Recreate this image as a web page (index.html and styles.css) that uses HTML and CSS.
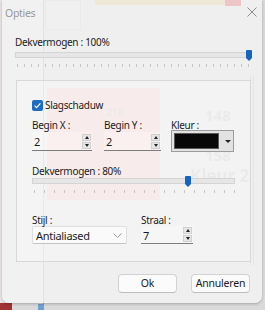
FILE: index.html
```html
<!DOCTYPE html>
<html lang="nl">

<head>
    <meta charset="UTF-8" />
    <meta name="viewport" content="width=device-width, initial-scale=1.0" />
    <title>Opties</title>
    <link rel="stylesheet" href="styles.css">
</head>

<body>
    <!-- what shows through the window behind it -->
    <div class="backdrop">
        <div class="bd-left"></div>
        <div class="bd-line"></div>
        <div class="bd-tab"></div>
        <div class="bd-yellow"></div>
        <div class="bd-red"></div>
        <div class="bd-pink"></div>
        <div class="bd-right"></div>
        <div class="bd-num n210">210</div>
        <div class="bd-num n148">148</div>
        <div class="bd-num n159">159</div>
        <div class="bd-num n158">158</div>
        <div class="bd-num k2">Kleur 2</div>
        <div class="bd-bottom"></div>
        <div class="bd-blue"></div>
    </div>

    <div class="dialog">
        <div class="titlebar">
            <span class="title">Opties</span>
            <svg class="close" width="10" height="10" viewBox="0 0 10 10">
                <path d="M0.5 0.5 L9.5 9.5 M9.5 0.5 L0.5 9.5" stroke="#8c8c8c" stroke-width="1" fill="none" />
            </svg>
        </div>

        <div class="content">
            <div class="label">Dekvermogen : 100%</div>
            <div class="slider slider-main">
                <div class="track"></div>
                <svg class="thumb" style="left: 231px" width="6" height="11" viewBox="0 0 6 11">
                    <path d="M1 0 H5 A1 1 0 0 1 6 1 V8 L3 11 L0 8 V1 A1 1 0 0 1 1 0 Z" fill="#1465c0" />
                </svg>
                <div class="ticks"></div>
            </div>

            <div class="group">
                <div class="check">
                    <svg width="11" height="11" viewBox="0 0 11 11">
                        <rect x="0" y="0" width="11" height="11" rx="2" fill="#1d6cc4" />
                        <path d="M2.6 5.6 L4.6 7.6 L8.4 3.4" stroke="#fff" stroke-width="1.2" fill="none" />
                    </svg>
                    <span>Slagschaduw</span>
                </div>

                <div class="row">
                    <div class="col col-x">
                        <div class="label">Begin X :</div>
                        <div class="spin">
                            <span>2</span>
                            <div class="arrows"><i class="up"></i><i class="down"></i></div>
                        </div>
                    </div>
                    <div class="col col-y">
                        <div class="label">Begin Y :</div>
                        <div class="spin">
                            <span>2</span>
                            <div class="arrows"><i class="up"></i><i class="down"></i></div>
                        </div>
                    </div>
                    <div class="col col-color">
                        <div class="label">Kleur :</div>
                        <div class="colorpick">
                            <div class="swatch"></div>
                            <i class="drop"></i>
                        </div>
                    </div>
                </div>

                <div class="label label-op">Dekvermogen : 80%</div>
                <div class="slider slider-shadow">
                    <div class="track"></div>
                    <svg class="thumb" style="left: 153px" width="6" height="11" viewBox="0 0 6 11">
                        <path d="M1 0 H5 A1 1 0 0 1 6 1 V8 L3 11 L0 8 V1 A1 1 0 0 1 1 0 Z" fill="#1465c0" />
                    </svg>
                    <div class="ticks"></div>
                </div>

                <div class="row row-bottom">
                    <div class="col col-style">
                        <div class="label">Stijl :</div>
                        <div class="combo">
                            <span>Antialiased</span>
                            <svg width="9" height="5" viewBox="0 0 9 5">
                                <path d="M0.5 0.5 L4.5 4.5 L8.5 0.5" stroke="#9a9a9a" stroke-width="1" fill="none" />
                            </svg>
                        </div>
                    </div>
                    <div class="col col-radius">
                        <div class="label">Straal :</div>
                        <div class="spin spin-low">
                            <span>7</span>
                            <div class="arrows"><i class="up"></i><i class="down"></i></div>
                        </div>
                    </div>
                </div>
            </div>

            <div class="buttons">
                <button>Ok</button>
                <button>Annuleren</button>
            </div>
        </div>
    </div>
</body>

</html>
```

FILE: styles.css
```css
* {
    box-sizing: border-box;
    margin: 0;
    padding: 0;
}

body {
    font-family: 'Noto Sans', 'Open Sans', sans-serif;
    font-size: 10px;
    letter-spacing: -0.3px;
    color: #1b1b1b;
    background: #4f4f4f;
    width: 265px;
    height: 310px;
    overflow: hidden;
    position: relative;
}

/* behind the dialog */
.backdrop {
    position: absolute;
    top: 0;
    left: 0;
    width: 265px;
    height: 310px;
    background: #dadada;
    z-index: 0;
}

.backdrop div {
    position: absolute;
}

.bd-left {
    left: 0;
    top: 0;
    width: 43px;
    height: 303px;
    background: #ece6e6;
}

.bd-line {
    left: 43px;
    top: 0;
    width: 1px;
    height: 310px;
    background: #9a9a9a;
}

.bd-tab {
    left: 45px;
    top: 0;
    width: 36px;
    height: 30px;
    border: 1px solid #c4c4c4;
    background: #dedede;
}

.bd-yellow {
    left: 95px;
    top: 0;
    width: 135px;
    height: 5px;
    background: #d8b860;
}

.bd-red {
    left: 225px;
    top: 0;
    width: 16px;
    height: 6px;
    background: #d01818;
}

.bd-pink {
    left: 47px;
    top: 88px;
    width: 113px;
    height: 112px;
    background: #ffa4a4;
}

.bd-right {
    left: 250px;
    top: 75px;
    width: 4px;
    height: 190px;
    border-left: 1px solid #b0b0b0;
    border-right: 1px solid #b0b0b0;
}

.bd-num {
    font-weight: bold;
    font-size: 15px;
    letter-spacing: 0;
    color: #a8a0a0;
    line-height: 1;
}

.n210 {
    left: 106px;
    top: 108px;
    font-size: 10px;
    line-height: 8px;
}

.n148 {
    left: 205px;
    top: 108px;
}

.n159 {
    left: 205px;
    top: 128px;
}

.n158 {
    left: 205px;
    top: 148px;
}

.k2 {
    left: 190px;
    top: 167px;
    font-size: 17px;
}

.bd-bottom {
    left: 0;
    top: 303px;
    width: 12px;
    height: 7px;
    background: #a03434;
}

.bd-blue {
    left: 38px;
    top: 304px;
    width: 6px;
    height: 6px;
    background: #6f9fd0;
}

/* dialog */
.dialog {
    position: relative;
    z-index: 1;
    width: 260px;
    height: 303px;
    margin-left: 2px;
    border-radius: 0 0 7px 7px;
    background: rgba(244, 244, 244, 0.8);
    box-shadow: 0 1px 3px rgba(0, 0, 0, 0.25);
}

.titlebar {
    height: 26px;
    display: flex;
    align-items: center;
    justify-content: space-between;
    padding: 0 5px 0 3px;
}

.title {
    color: #9a9a9a;
    font-size: 10.5px;
}

.close {
    margin-top: -2px;
}

.content {
    padding: 0 12px 0 13px;
}

.label {
    line-height: 14px;
    height: 14px;
    white-space: nowrap;
}

.content > .label {
    margin-top: 9px;
}

/* sliders */
.slider {
    position: relative;
    height: 18px;
}

.slider-main {
    margin-top: 1px;
    width: 235px;
}

.slider-shadow {
    margin-top: -2px;
    width: 203px;
}

.track {
    position: absolute;
    left: 0;
    right: 0;
    top: 2px;
    height: 6px;
    border: 1px solid #d4d4d4;
    background: #e6e6e6;
}

.thumb {
    position: absolute;
    top: 0;
}

.ticks {
    position: absolute;
    left: 2px;
    right: 0;
    top: 14px;
    height: 3px;
}

.slider-main .ticks {
    background: repeating-linear-gradient(to right, #c6c6c6 0 1px, transparent 1px 7px);
}

.slider-shadow .ticks {
    background: repeating-linear-gradient(to right, #c6c6c6 0 1px, transparent 1px 10px);
}

/* group box */
.group {
    margin-top: 12px;
    margin-left: 1px;
    width: 235px;
    border: 1px solid #d8d8d8;
    background: rgba(255, 255, 255, 0.25);
    padding: 18px 0 17px 15px;
}

.check {
    display: flex;
    align-items: center;
    gap: 2px;
    height: 12px;
    line-height: 12px;
}

.row {
    display: flex;
    margin-top: 7px;
}

.col-x {
    width: 60px;
}

.col-y {
    width: 57px;
    margin-left: 12px;
}

.col-color {
    width: 63px;
    margin-left: 10px;
}

.spin {
    height: 19px;
    display: flex;
    align-items: center;
    justify-content: space-between;
    padding: 0 1px 0 2px;
    font-size: 11px;
    border-bottom: 1px solid #7d7d7d;
    background: rgba(255, 255, 255, 0.25);
}

.spin span {
    padding-top: 1px;
}

.arrows {
    display: flex;
    flex-direction: column;
    gap: 1px;
}

.arrows i {
    display: block;
    width: 9px;
    height: 7px;
    background: #e6e6e6;
    border: 1px solid #d0d0d0;
    position: relative;
}

.arrows i::after {
    content: '';
    position: absolute;
    left: 1.5px;
    top: 1px;
    border-left: 2.5px solid transparent;
    border-right: 2.5px solid transparent;
}

.arrows .up::after {
    border-bottom: 3px solid #222;
}

.arrows .down::after {
    border-top: 3px solid #222;
}

.colorpick {
    height: 22px;
    margin-top: -2px;
    border: 1px solid #9c9c9c;
    background: #e2e2e2;
    display: flex;
    align-items: center;
    padding: 0 2px;
}

.swatch {
    width: 45px;
    height: 16px;
    background: #080808;
    border: 1px solid #5a5a5a;
}

.drop {
    margin-left: 6px;
    border-left: 3px solid transparent;
    border-right: 3px solid transparent;
    border-top: 3px solid #222;
}

.label-op {
    margin-top: 12px;
}

.row-bottom {
    margin-top: 19px;
}

.col-style {
    width: 95px;
}

.col-radius {
    width: 52px;
    margin-left: 14px;
}

.combo {
    margin-top: -1px;
    height: 18px;
    display: flex;
    align-items: center;
    justify-content: space-between;
    padding: 0 4px 0 3px;
    font-size: 11px;
    border: 1px solid #dedede;
    border-bottom-color: #c4c4c4;
    border-radius: 2px;
    background: rgba(255, 255, 255, 0.6);
}

.spin-low {
    margin-top: -1px;
    height: 18px;
}

/* buttons */
.buttons {
    display: flex;
    justify-content: flex-end;
    gap: 14px;
    margin-top: 12px;
    width: 235px;
}

button {
    font-family: inherit;
    font-size: 10.5px;
    letter-spacing: -0.2px;
    color: #1b1b1b;
    width: 59px;
    height: 19px;
    border: 1px solid #d2d2d2;
    border-bottom-color: #bdbdbd;
    border-radius: 4px;
    background: #fbfbfb;
    line-height: 15px;
}
```
